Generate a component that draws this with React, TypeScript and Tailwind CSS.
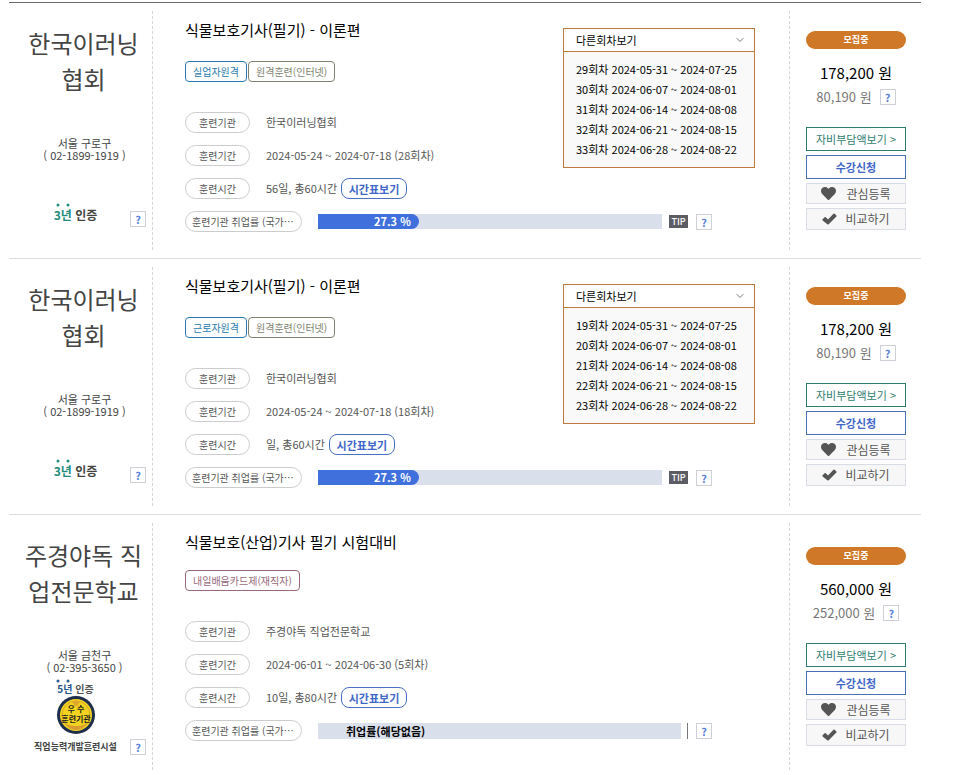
import React from 'react';
import { ChevronDown } from 'lucide-react';
import { FaHeart } from 'react-icons/fa';

interface Course {
  id: number;
  school: string;
  region: string;
  phone: string;
  years: string;
  excellent: boolean;
  title: string;
  tags: { label: string; style: string }[];
  institute: string;
  period: string;
  hours: string;
  rate: number | null;
  rounds: string[];
  price: string;
  ownPrice: string;
}

const TAG_STYLES = {
  blue: 'border-[#2a79ad] text-[#2a79ad]',
  olive: 'border-[#7d826e] text-[#7d826e]',
  plum: 'border-[#96687a] text-[#96687a]'
};

const COURSES: Course[] = [
  {
    id: 1,
    school: '한국이러닝협회',
    region: '서울 구로구',
    phone: '( 02-1899-1919 )',
    years: '3년',
    excellent: false,
    title: '식물보호기사(필기) - 이론편',
    tags: [
      { label: '실업자원격', style: TAG_STYLES.blue },
      { label: '원격훈련(인터넷)', style: TAG_STYLES.olive }
    ],
    institute: '한국이러닝협회',
    period: '2024-05-24 ~ 2024-07-18 (28회차)',
    hours: '56일, 총60시간',
    rate: 27.3,
    rounds: [
      '29회차 2024-05-31 ~ 2024-07-25',
      '30회차 2024-06-07 ~ 2024-08-01',
      '31회차 2024-06-14 ~ 2024-08-08',
      '32회차 2024-06-21 ~ 2024-08-15',
      '33회차 2024-06-28 ~ 2024-08-22'
    ],
    price: '178,200 원',
    ownPrice: '80,190 원'
  },
  {
    id: 2,
    school: '한국이러닝협회',
    region: '서울 구로구',
    phone: '( 02-1899-1919 )',
    years: '3년',
    excellent: false,
    title: '식물보호기사(필기) - 이론편',
    tags: [
      { label: '근로자원격', style: TAG_STYLES.blue },
      { label: '원격훈련(인터넷)', style: TAG_STYLES.olive }
    ],
    institute: '한국이러닝협회',
    period: '2024-05-24 ~ 2024-07-18 (18회차)',
    hours: '일, 총60시간',
    rate: 27.3,
    rounds: [
      '19회차 2024-05-31 ~ 2024-07-25',
      '20회차 2024-06-07 ~ 2024-08-01',
      '21회차 2024-06-14 ~ 2024-08-08',
      '22회차 2024-06-21 ~ 2024-08-15',
      '23회차 2024-06-28 ~ 2024-08-22'
    ],
    price: '178,200 원',
    ownPrice: '80,190 원'
  },
  {
    id: 3,
    school: '주경야독 직업전문학교',
    region: '서울 금천구',
    phone: '( 02-395-3650 )',
    years: '5년',
    excellent: true,
    title: '식물보호(산업)기사 필기 시험대비',
    tags: [{ label: '내일배움카드제(재직자)', style: TAG_STYLES.plum }],
    institute: '주경야독 직업전문학교',
    period: '2024-06-01 ~ 2024-06-30 (5회차)',
    hours: '10일, 총80시간',
    rate: null,
    rounds: [],
    price: '560,000 원',
    ownPrice: '252,000 원'
  }
];

function HelpButton() {
  return (
    <button
      type="button"
      className="flex h-4 w-4 shrink-0 items-center justify-center border border-[#cdd0d6] bg-white text-[11px] leading-3 font-bold text-[#5b7fdb]"
    >
      ?
    </button>
  );
}

// Round gold medal given to excellent institutes
function Medal() {
  return (
    <svg width="40" height="40" viewBox="0 0 40 40" className="shrink-0">
      <circle cx="20" cy="20" r="19" fill="#1d2f4c" />
      <circle cx="20" cy="20" r="16" fill="#f4d320" />
      <circle cx="20" cy="20" r="14" fill="none" stroke="#d9a52a" strokeWidth="1" />
      <path d="M20 4l1.300 2.800 3 .3-2.200 2 .6 3L20 10.600l-2.700 1.500.6-3-2.200-2 3-.3z" fill="#e0a52c" />
      <path d="M8 27c3 5 7 8 12 8s9-3 12-8c-3 3-7 4-12 4s-9-1-12-4z" fill="#d99c33" />
      <text x="20" y="17" textAnchor="middle" fontSize="8" fontWeight="700" fill="#1c1c1c">
        우 수
      </text>
      <text x="20" y="27" textAnchor="middle" fontSize="8" fontWeight="700" fill="#1c1c1c">
        훈련기관
      </text>
    </svg>
  );
}

function Dots({ className }: { className: string }) {
  return (
    <svg width="44" height="4" viewBox="0 0 44 4" fill="currentColor" className={className}>
      <circle cx="4" cy="2" r="1.500" />
      <circle cx="14" cy="2" r="1.500" />
    </svg>
  );
}

function Certificate({ years, excellent }: { years: string; excellent: boolean }) {
  if (excellent) {
    return (
      <div className="flex flex-1 flex-col items-center">
        <Dots className="text-[#2a5f92]" />
        <p className="text-[10px] leading-3 font-bold text-[#555]">
          <span className="text-[#245488]">{years}</span> 인증
        </p>
        <Medal />
        <p className="mt-1 text-[9px] leading-4 font-bold whitespace-nowrap text-[#444]">
          직업능력개발훈련시설
        </p>
      </div>
    );
  }
  return (
    <div className="flex flex-1 flex-col items-center">
      <Dots className="text-[#218b7d]" />
      <p className="mb-1 text-xs leading-4 font-bold text-[#444]">
        <span className="text-[#218b7d]">{years}</span> 인증
      </p>
    </div>
  );
}

function Label({ children }: { children: React.ReactNode }) {
  return (
    <dt className="h-[21px] w-[65px] shrink-0 rounded-full border border-[#ccc] text-center text-[10px] leading-5 text-[#555]">
      {children}
    </dt>
  );
}

function Rounds({ rounds }: { rounds: string[] }) {
  return (
    <div className="relative w-48 shrink-0 self-start text-[11px] text-black">
      <button
        type="button"
        aria-expanded="true"
        className="flex h-6 w-full items-center justify-between border border-[#bd7a3c] bg-white pr-2 pl-3"
      >
        다른회차보기
        <ChevronDown size={12} strokeWidth={2} className="text-[#777]" />
      </button>
      <ul className="absolute inset-x-0 top-full border border-t-0 border-[#bd7a3c] bg-[#f9f9f9] px-3 pt-[7px] pb-2">
        {rounds.map((round) => (
          <li key={round}>
            <a href="#" className="block leading-5 whitespace-nowrap">
              {round}
            </a>
          </li>
        ))}
      </ul>
    </div>
  );
}

function RateBar({ rate }: { rate: number | null }) {
  if (rate === null) {
    return (
      <dd className="flex flex-1 items-center">
        <div className="h-4 flex-1 bg-[#d9dfeb] pl-7 text-[11px] leading-4 font-bold text-black">
          취업률(해당없음)
        </div>
        <span className="mr-2 ml-1.5 h-4 w-px bg-[#777]" />
        <HelpButton />
      </dd>
    );
  }
  return (
    <dd className="flex flex-1 items-center">
      <div className="h-[15px] flex-1 bg-[#d9dfeb]">
        <div
          className="h-full rounded-r-full bg-[#4070dc] pr-2 text-right text-[11px] leading-[15px] font-bold text-white"
          style={{ width: `${rate + 2}%` }}
        >
          {rate} %
        </div>
      </div>
      <span className="mr-2 ml-[7px] h-[13px] w-[19px] bg-[#5c5d64] text-center text-[9px] leading-[13px] font-medium text-white">
        TIP
      </span>
      <HelpButton />
    </dd>
  );
}

function CourseRow({ course }: { course: Course }) {
  return (
    <li className="flex border-b border-[#ddd] py-2 last:border-b-0">
      {/* Institute */}
      <div className="flex min-h-[239px] w-36 shrink-0 flex-col border-r border-dashed border-[#d5d5d5] pt-3.5 pb-[15px]">
        <h2 className="pr-1 pl-2.5 text-center text-[24px] leading-9 break-all text-[#444]">{course.school}</h2>
        <p className="mt-10 pl-2 text-center text-[11px] leading-3 text-[#444]">
          {course.region}
          <br />
          {course.phone}
        </p>
        <div className={`flex items-end pr-1.5 pl-3 ${course.excellent ? 'mt-1.5' : 'mt-[42px]'}`}>
          <Certificate years={course.years} excellent={course.excellent} />
          <HelpButton />
        </div>
      </div>

      {/* Course details */}
      <div className="min-w-0 flex-1 pr-[34px] pl-8">
        <div className="flex justify-between pt-[17px]">
          <div className="-mt-3">
            <h3 className="text-[15px] leading-7 text-black">
              <a href="#">{course.title}</a>
            </h3>
            <div className={`mb-[30px] flex gap-px ${course.excellent ? 'mt-3.5' : 'mt-[17px]'}`}>
              {course.tags.map((tag) => (
                <span
                  key={tag.label}
                  className={`h-[21px] rounded-sm border px-[7px] text-[10px] leading-5 whitespace-nowrap ${tag.style}`}
                >
                  {tag.label}
                </span>
              ))}
            </div>
          </div>
          {course.rounds.length > 0 && <Rounds rounds={course.rounds} />}
        </div>

        <dl className="flex flex-col gap-3 text-[11px] leading-5 text-[#555]">
          <div className="flex gap-4">
            <Label>훈련기관</Label>
            <dd>{course.institute}</dd>
          </div>
          <div className="flex gap-4">
            <Label>훈련기간</Label>
            <dd>{course.period}</dd>
          </div>
          <div className="flex gap-4">
            <Label>훈련시간</Label>
            <dd className="flex gap-1">
              {course.hours}
              <button
                type="button"
                className="h-[21px] w-[66px] rounded-lg border border-[#4a6fc4] text-[11px] leading-5 font-bold text-[#3f66c8]"
              >
                시간표보기
              </button>
            </dd>
          </div>
          <div className="flex items-center gap-4 pr-[43px]">
            <dt className="h-[21px] w-[117px] shrink-0 rounded-full border border-[#ccc] px-1.5 text-[10px] leading-5 whitespace-nowrap">
              훈련기관 취업률 (국가…
            </dt>
            <RateBar rate={course.rate} />
          </div>
        </dl>
      </div>

      {/* Price and actions */}
      <div className="flex w-[132px] shrink-0 flex-col justify-center border-l border-dashed border-[#d5d5d5] pr-[15px] pl-4">
        <span className="h-[18px] rounded-full bg-[#cf7828] text-center text-[9px] leading-[18px] font-bold text-white">
          모집중
        </span>
        <p className="mt-3 text-center text-[15px] leading-6 whitespace-nowrap text-black">{course.price}</p>
        <div className="flex h-6 items-center justify-center gap-2 text-[13px] leading-6 whitespace-nowrap text-[#777]">
          {course.ownPrice}
          <HelpButton />
        </div>
        <div className="mt-[18px] flex flex-col gap-1">
          <a href="#" className="h-6 border border-[#2f7d70] bg-white text-center text-[11px] leading-[22px] text-[#2f7d70]">
            자비부담액보기 &gt;
          </a>
          <button type="button" className="h-6 border border-[#4a6fb5] bg-white text-[11px] font-bold text-[#3f66c8]">
            수강신청
          </button>
          <button
            type="button"
            className="flex h-[21px] items-center justify-center gap-2.5 border border-[#d8dce5] bg-[#f7f7f8] text-xs text-[#555]"
          >
            <FaHeart size={15} />
            관심등록
          </button>
          <button
            type="button"
            className="flex h-[22px] items-center justify-center gap-2 border border-[#d8dce5] bg-[#f7f7f8] text-xs text-[#555]"
          >
            <svg width="15" height="12" viewBox="0 0 15 12" fill="currentColor">
              <path d="M.6 6.300 2.600 4.300q.6-.5 1.200 0L6 6.400 11.400.7q.6-.5 1.200 0l1.800 1.700q.5.6 0 1.200L6.700 11.300q-.7.5-1.400 0L.6 7.500q-.5-.6 0-1.200z" />
            </svg>
            비교하기
          </button>
        </div>
      </div>
    </li>
  );
}

export default function App() {
  return (
    <main
      lang="ko"
      className="bg-white pt-0.5 pr-8 pl-[9px] font-['Noto_Sans_CJK_KR','Noto_Sans',sans-serif]"
    >
      <ul className="border-t border-[#6b6b6b]">
        {COURSES.map((course) => (
          <CourseRow key={course.id} course={course} />
        ))}
      </ul>
    </main>
  );
}
